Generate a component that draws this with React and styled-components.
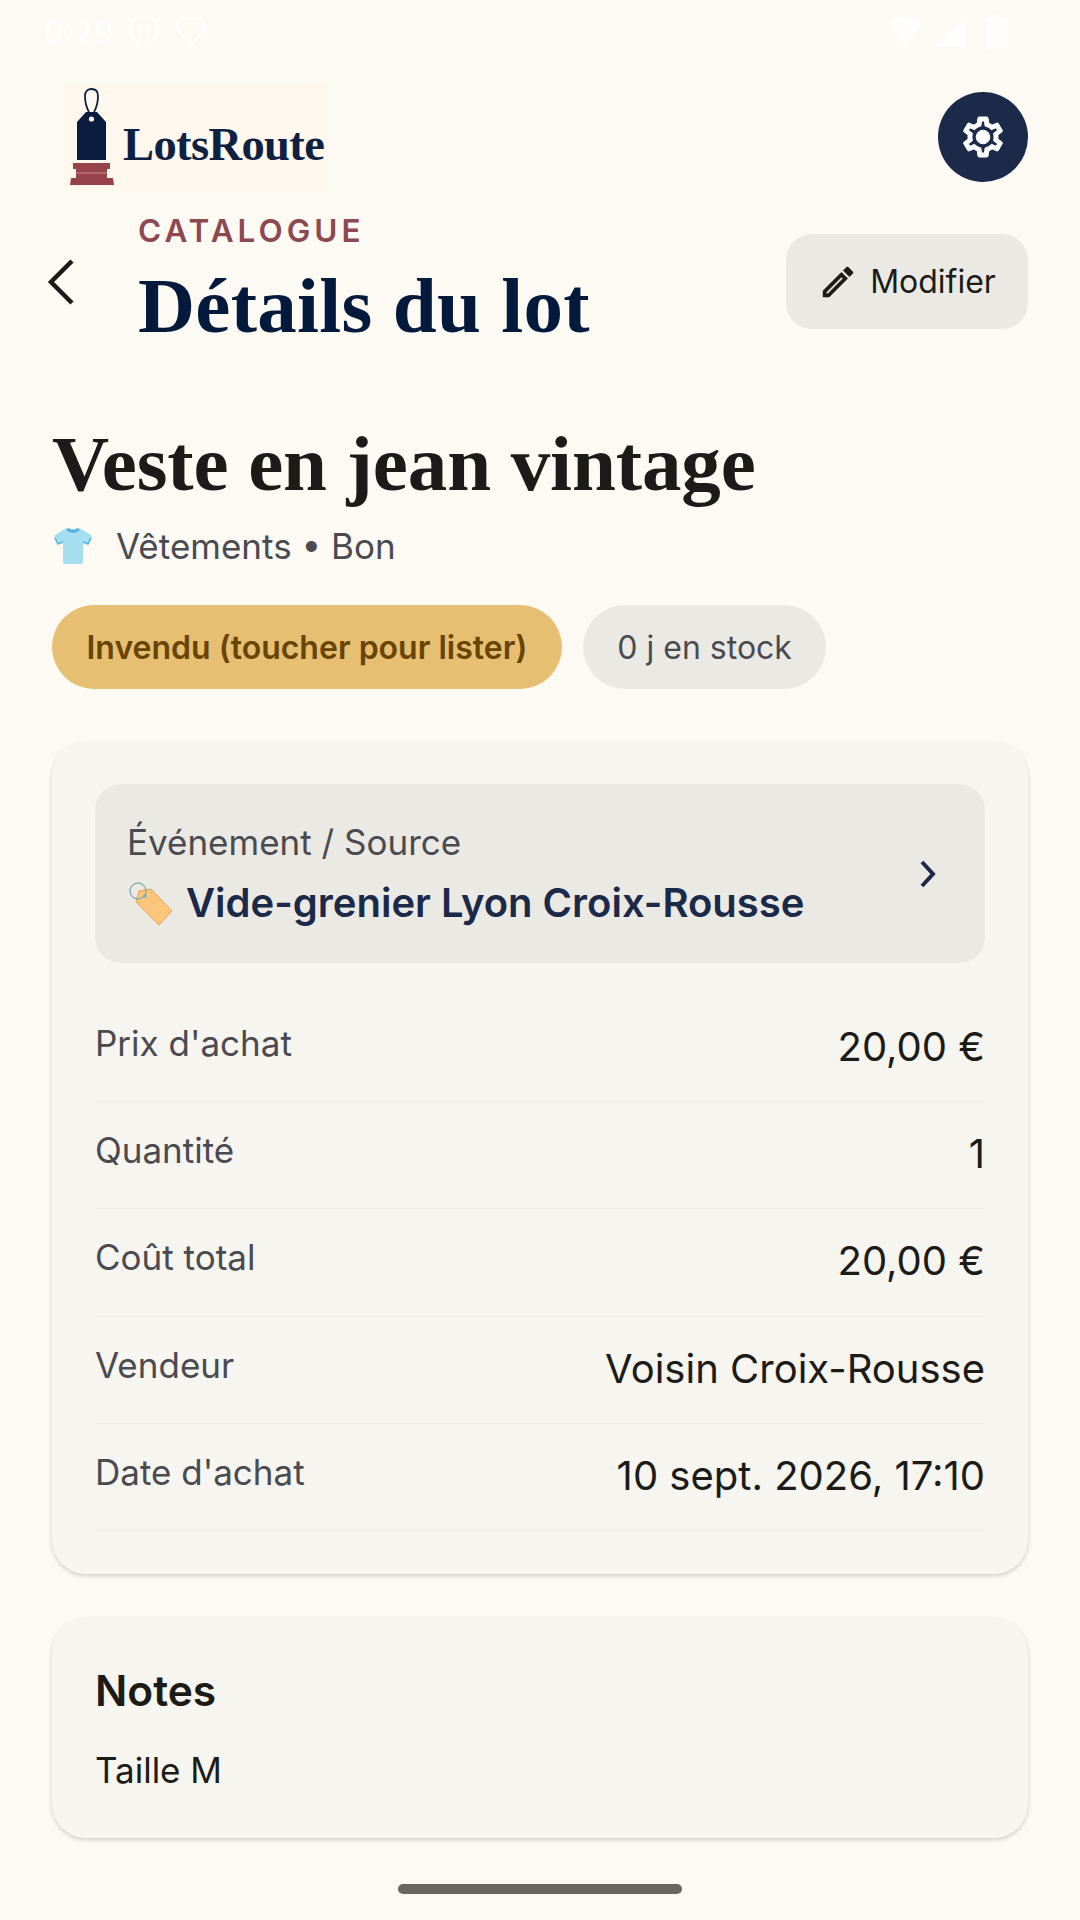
import React from 'react';
import styled, { createGlobalStyle } from 'styled-components';

const GlobalStyle = createGlobalStyle`
  html, body {
    margin: 0;
    padding: 0;
    background: #fdfaf4;
  }
  * {
    box-sizing: border-box;
  }
`;

const Page = styled.div`
  width: 1080px;
  height: 1920px;
  overflow: hidden;
  background: #fdfaf4;
  font-family: Inter, "Liberation Sans", sans-serif;
  color: #1c1b17;
  display: flex;
  flex-direction: column;
`;

// status bar
const StatusBar = styled.div`
  height: 64px;
  padding: 0 72px 0 44px;
  display: flex;
  align-items: center;
  justify-content: space-between;
  color: #fffefb;
`;

const StatusGroup = styled.div`
  display: flex;
  align-items: center;
  gap: ${(props) => props.$gap || 10}px;
`;

const StatusTime = styled.span`
  font-size: 32px;
  font-weight: 500;
`;

// top bar
const TopBar = styled.div`
  height: 131px;
  margin-top: 18px;
  padding: 0 52px 0 62px;
  display: flex;
  align-items: flex-start;
  justify-content: space-between;
`;

const LogoBox = styled.div`
  width: 266px;
  height: 107px;
  margin-top: 1px;
  padding: 5px 0 0 8px;
  background: #fef8ee;
  display: flex;
  align-items: flex-start;
  gap: 9px;
`;

const LogoText = styled.span`
  margin-top: 31px;
  font-family: "Liberation Serif", serif;
  font-weight: 700;
  font-size: 46.5px;
  line-height: 52px;
  letter-spacing: -0.6px;
  color: #0f2142;
`;

const RoundButton = styled.div`
  width: 90px;
  height: 90px;
  margin-top: 10px;
  border-radius: 50%;
  background: #1b2a49;
  display: flex;
  align-items: center;
  justify-content: center;
`;

// header
const HeaderRow = styled.div`
  height: 137px;
  padding: 0 52px 0 46px;
  display: flex;
  align-items: flex-start;
`;

const BackIcon = styled.div`
  width: 92px;
  margin-top: 45px;
  display: flex;
`;

const HeaderText = styled.div`
  flex: 1;
  display: flex;
  flex-direction: column;
`;

const Eyebrow = styled.div`
  font-size: 31.5px;
  line-height: 36px;
  font-weight: 600;
  letter-spacing: 4px;
  color: #8d4852;
`;

const PageTitle = styled.h1`
  margin: 12px 0 0;
  font-family: "Liberation Serif", serif;
  font-weight: 700;
  font-size: 79px;
  line-height: 90px;
  letter-spacing: 0.3px;
  color: #031a3c;
`;

const EditButton = styled.div`
  width: 242px;
  height: 95px;
  margin-top: 21px;
  border-radius: 26px;
  background: #ebe9e4;
  display: flex;
  align-items: center;
  justify-content: center;
  gap: 12px;
  font-size: 32px;
  color: #1c1b17;
`;

// item
const ItemHead = styled.div`
  margin-top: 68px;
  padding: 0 52px;
`;

const ItemTitle = styled.h2`
  margin: 0;
  font-family: "Liberation Serif", serif;
  font-weight: 700;
  font-size: 79px;
  line-height: 92px;
  letter-spacing: -0.1px;
  color: #1c1b17;
`;

const MetaRow = styled.div`
  margin-top: 14px;
  padding-left: 2px;
  height: 44px;
  display: flex;
  align-items: center;
  gap: 24px;
  font-size: 35px;
  color: #4a4a50;
`;

const PillRow = styled.div`
  margin-top: 37px;
  display: flex;
  gap: 21px;
`;

const Pill = styled.div`
  height: 84px;
  padding: 0 34.5px;
  border-radius: 42px;
  display: flex;
  align-items: center;
  font-size: 32px;
  font-weight: ${(props) => (props.$active ? 600 : 400)};
  background: ${(props) => (props.$active ? '#e6bf73' : '#ebe9e4')};
  color: ${(props) => (props.$active ? '#674400' : '#4a4a50')};
`;

// cards
const Card = styled.div`
  margin: ${(props) => props.$top}px 52px 0;
  padding: ${(props) => props.$pad};
  border-radius: 34px;
  background: #f7f5f0;
  box-shadow: 0 2px 4px rgba(60, 55, 45, 0.22);
`;

const SourceBox = styled.div`
  height: 179px;
  margin-bottom: 32px;
  padding: 0 47px 0 32px;
  border-radius: 26px;
  background: #ebe9e4;
  display: flex;
  align-items: center;
  justify-content: space-between;
`;

const SourceText = styled.div`
  display: flex;
  flex-direction: column;
  gap: 16px;
`;

const SourceLabel = styled.div`
  font-size: 35px;
  line-height: 42px;
  color: #4a4a50;
`;

const SourceValue = styled.div`
  display: flex;
  align-items: center;
  gap: 13px;
  font-size: 40px;
  line-height: 48px;
  font-weight: 600;
  color: #1b2a49;
`;

const InfoRow = styled.div`
  height: 107.2px;
  padding-top: 26px;
  display: flex;
  justify-content: space-between;
  align-items: flex-start;
  border-bottom: 1.5px solid #efece6;
`;

const InfoLabel = styled.span`
  font-size: 35px;
  line-height: 44px;
  color: #4a4a50;
`;

const InfoValue = styled.span`
  margin-top: 3px;
  font-size: 40px;
  line-height: 46px;
  color: #1c1b17;
`;

const NotesTitle = styled.h3`
  margin: 0;
  font-size: 42.5px;
  line-height: 50px;
  font-weight: 600;
  color: #1c1b17;
`;

const NotesBody = styled.p`
  margin: 32px 0 0;
  font-size: 35px;
  line-height: 44px;
  color: #1c1b17;
`;

// nav handle
const HomeIndicator = styled.div`
  width: 284px;
  height: 10px;
  margin: 46px auto 0;
  border-radius: 5px;
  background: #68665f;
`;

const GEAR =
  'M19.43 12.98c.04-.32.07-.64.07-.98 0-.34-.03-.66-.07-.98l2.11-1.65c.19-.15.24-.42.12-.64l-2-3.46c-.09-.16-.26-.25-.44-.25-.06 0-.12.01-.17.03l-2.49 1c-.52-.4-1.08-.73-1.69-.98l-.38-2.65C14.46 2.18 14.25 2 14 2h-4c-.25 0-.46.18-.49.42l-.38 2.65c-.61.25-1.17.59-1.69.98l-2.49-1c-.06-.02-.12-.03-.18-.03-.17 0-.34.09-.43.25l-2 3.46c-.13.22-.07.49.12.64l2.11 1.65c-.04.32-.07.65-.07.98 0 .33.03.66.07.98l-2.11 1.65c-.19.15-.24.42-.12.64l2 3.46c.09.16.26.25.44.25.06 0 .12-.01.17-.03l2.49-1c.52.4 1.08.73 1.69.98l.38 2.65c.03.24.24.42.49.42h4c.25 0 .46-.18.49-.42l.38-2.65c.61-.25 1.17-.59 1.69-.98l2.49 1c.06.02.12.03.18.03.17 0 .34-.09.43-.25l2-3.46c.12-.22.07-.49-.12-.64l-2.11-1.65zm-1.98-1.71c.04.31.05.52.05.73 0 .21-.02.43-.05.73l-.14 1.13.89.7 1.08.84-.7 1.21-1.27-.51-1.04-.42-.9.68c-.43.32-.84.56-1.25.73l-1.06.43-.16 1.13-.2 1.35h-1.4l-.19-1.35-.16-1.13-1.06-.43c-.43-.18-.83-.41-1.23-.71l-.91-.7-1.06.43-1.27.51-.7-1.21 1.08-.84.89-.7-.14-1.13c-.03-.31-.05-.54-.05-.74s.02-.43.05-.73l.14-1.13-.89-.7-1.08-.84.7-1.21 1.27.51 1.04.42.9-.68c.43-.32.84-.56 1.25-.73l1.06-.43.16-1.13.2-1.35h1.39l.19 1.35.16 1.13 1.06.43c.43.18.83.41 1.23.71l.91.7 1.06-.43 1.27-.51.7 1.21-1.07.85-.89.7.14 1.13z';

const PENCIL =
  'M14.06 9.02l.92.92L5.92 19H5v-.92l9.06-9.06M17.66 3c-.25 0-.51.1-.7.29l-1.83 1.83 3.75 3.75 1.83-1.83c.39-.39.39-1.02 0-1.41l-2.34-2.34c-.2-.2-.45-.29-.71-.29zm-3.6 3.19L3 17.25V21h3.75L17.81 9.94l-3.75-3.75z';

const TagMark = () => (
  <svg width="44" height="97" viewBox="0 0 44 97" fill="none">
    <path d="M19 24C15 17 15 12 15 8C15 3 18 1 21.500 1C25 1 28 3 28 8C28 12 28 17 24 24" stroke="#0f2142" strokeWidth="1.800" />
    <path d="M16 24H27L36 34V72H7V34Z" fill="#0a1c3d" />
    <circle cx="21.500" cy="31" r="2.600" fill="#fef8ee" />
    <path d="M3 75H40V81H37V90H43L44 97H0L1 90H6V81H3Z" fill="#97434b" />
    <path d="M6 85H37" stroke="#c78a8c" strokeWidth="1" />
  </svg>
);

const ShirtEmoji = () => (
  <svg width="38" height="36" viewBox="0 0 38 36">
    <path d="M11 1L1 7C0 8 0 9 1 11L4 16L9 14V34C9 35 10 36 11 36H27C28 36 29 35 29 34V14L34 16L37 11C38 9 38 8 37 7L27 1C24 3 14 3 11 1Z" fill="#a5deee" />
    <path d="M12 1C14 6 24 6 26 1L23 0C22 2 16 2 15 0Z" fill="#4fb2e3" />
    <path d="M1 10L4 16L9 14" fill="none" stroke="#4fb2e3" strokeWidth="1.500" />
    <path d="M37 10L34 16L29 14" fill="none" stroke="#4fb2e3" strokeWidth="1.500" />
  </svg>
);

const LabelEmoji = () => (
  <svg width="46" height="46" viewBox="0 0 46 46">
    <path d="M12 11L24 9L45 31L32 45L9 22Z" fill="#fcc77c" stroke="#eba04a" strokeWidth="1" />
    <circle cx="18" cy="16" r="2" fill="#8fb5b0" />
    <circle cx="11" cy="11" r="8" fill="none" stroke="#7fb0b0" strokeWidth="1.300" />
  </svg>
);

const rows = [
  ["Prix d'achat", '20,00 €'],
  ['Quantité', '1'],
  ['Coût total', '20,00 €'],
  ['Vendeur', 'Voisin Croix-Rousse'],
  ["Date d'achat", '10 sept. 2026, 17:10'],
];

export default function App() {
  return (
    <Page>
      <GlobalStyle />
      <StatusBar>
        <StatusGroup $gap={15}>
          <StatusTime>9:29</StatusTime>
          <svg width="30" height="36" viewBox="0 0 30 36" fill="none" stroke="#fffefb" strokeWidth="3">
            <path d="M15 2L28 6V18C28 26 22 31 15 34C8 31 2 26 2 18V6Z" />
            <path d="M11 10V24M19 10V24" />
          </svg>
          <svg width="34" height="32" viewBox="0 0 34 32" fill="none" stroke="#fffefb" strokeWidth="3">
            <path d="M8 3H26L32 11L17 30L2 11Z" />
          </svg>
        </StatusGroup>
        <StatusGroup $gap={20}>
          <StatusGroup $gap={12}>
            <svg width="34" height="34" viewBox="0 0 38 36" fill="#fffefb">
              <path d="M0 8C11 -2 27 -2 38 8L19 36Z" />
            </svg>
            <svg width="31" height="30" viewBox="0 0 34 32" fill="#fffefb">
              <path d="M34 0V32H0Z" />
            </svg>
          </StatusGroup>
          <svg width="22" height="34" viewBox="0 0 22 34" fill="#fffefb">
            <path d="M7 0H15V3H22V34H0V3H7Z" />
          </svg>
        </StatusGroup>
      </StatusBar>

      <TopBar>
        <LogoBox>
          <TagMark />
          <LogoText>LotsRoute</LogoText>
        </LogoBox>
        <RoundButton>
          <svg width="48" height="48" viewBox="0 0 24 24" fill="#ffffff" stroke="#ffffff" strokeWidth="0.500">
            <path d={GEAR} />
            <circle cx="12" cy="12" r="3.400" />
          </svg>
        </RoundButton>
      </TopBar>

      <HeaderRow>
        <BackIcon>
          <svg width="30" height="48" viewBox="0 0 30 48" fill="none" stroke="#1c1b17" strokeWidth="4.500">
            <path d="M26 3L5 24L26 45" />
          </svg>
        </BackIcon>
        <HeaderText>
          <Eyebrow>CATALOGUE</Eyebrow>
          <PageTitle>Détails du lot</PageTitle>
        </HeaderText>
        <EditButton>
          <svg width="40" height="40" viewBox="0 0 24 24" fill="#1c1b17" stroke="#1c1b17" strokeWidth="0.300">
            <path d={PENCIL} />
          </svg>
          Modifier
        </EditButton>
      </HeaderRow>

      <ItemHead>
        <ItemTitle>Veste en jean vintage</ItemTitle>
        <MetaRow>
          <ShirtEmoji />
          <span>Vêtements • Bon</span>
        </MetaRow>
        <PillRow>
          <Pill $active>Invendu (toucher pour lister)</Pill>
          <Pill>0 j en stock</Pill>
        </PillRow>
      </ItemHead>

      <Card $top={53} $pad="42px 43px 43px">
        <SourceBox>
          <SourceText>
            <SourceLabel>Événement / Source</SourceLabel>
            <SourceValue>
              <LabelEmoji />
              Vide-grenier Lyon Croix-Rousse
            </SourceValue>
          </SourceText>
          <svg width="20" height="30" viewBox="0 0 20 30" fill="none" stroke="#1b2a49" strokeWidth="4">
            <path d="M4 3L15 15L4 27" />
          </svg>
        </SourceBox>
        {rows.map(([label, value]) => (
          <InfoRow key={label}>
            <InfoLabel>{label}</InfoLabel>
            <InfoValue>{value}</InfoValue>
          </InfoRow>
        ))}
      </Card>

      <Card $top={44} $pad="48px 43px 46px">
        <NotesTitle>Notes</NotesTitle>
        <NotesBody>Taille M</NotesBody>
      </Card>

      <HomeIndicator />
    </Page>
  );
}
